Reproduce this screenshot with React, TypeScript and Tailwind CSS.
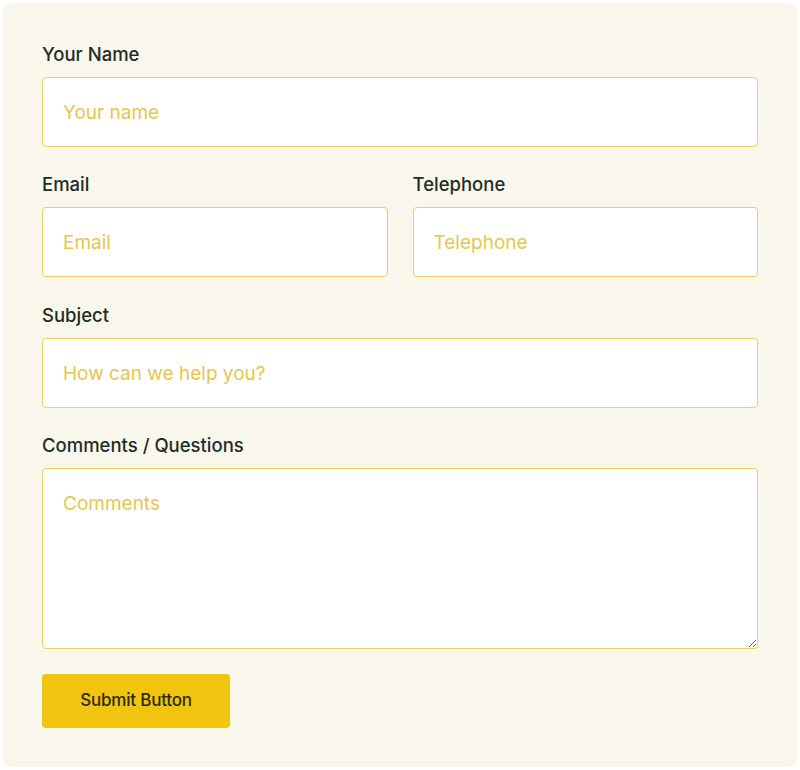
import React from "react";

const labelCls =
  "block font-['Inter',sans-serif] text-[18.5px] leading-[26px] font-medium text-[#1f2d27] mb-[10px] tracking-[0px]";
const inputCls =
  "block w-full h-[70px] bg-white border border-[#ecd060] rounded-[4px] px-[20px] font-['Inter',sans-serif] text-[19px] text-[#333] placeholder:text-[#e8c54c] outline-none";

export default function App() {
  return (
    <div className="w-[800px] h-[770px] bg-white p-[3px] font-['Inter',sans-serif]">
      <form className="w-[794px] h-[764px] bg-[#f9f6ec] rounded-[8px] px-[39px] pt-[38px] flex flex-col">
        <div>
          <label className={labelCls}>Your Name</label>
          <input className={inputCls} placeholder="Your name" />
        </div>

        <div className="flex gap-[25px] mt-[24px]">
          <div className="flex-1">
            <label className={labelCls}>Email</label>
            <input className={inputCls} placeholder="Email" />
          </div>
          <div className="flex-1">
            <label className={labelCls}>Telephone</label>
            <input className={inputCls} placeholder="Telephone" />
          </div>
        </div>

        <div className="mt-[25px]">
          <label className={labelCls}>Subject</label>
          <input className={inputCls} placeholder="How can we help you?" />
        </div>

        <div className="mt-[24px]">
          <label className={labelCls}>Comments / Questions</label>
          <textarea
            className="block w-full h-[181px] bg-white border border-[#ecd060] rounded-[4px] px-[20px] pt-[23px] font-['Inter',sans-serif] text-[19px] leading-[24px] text-[#333] placeholder:text-[#e8c54c] outline-none"
            placeholder="Comments"
          />
        </div>

        <div className="mt-[25px]">
          <button
            type="button"
            className="w-[188px] h-[54px] bg-[#f1c40f] rounded-[4px] font-['Inter',sans-serif] font-medium text-[17px] tracking-[-0.2px] text-[#2b2a10]"
          >
            Submit Button
          </button>
        </div>
      </form>
    </div>
  );
}
